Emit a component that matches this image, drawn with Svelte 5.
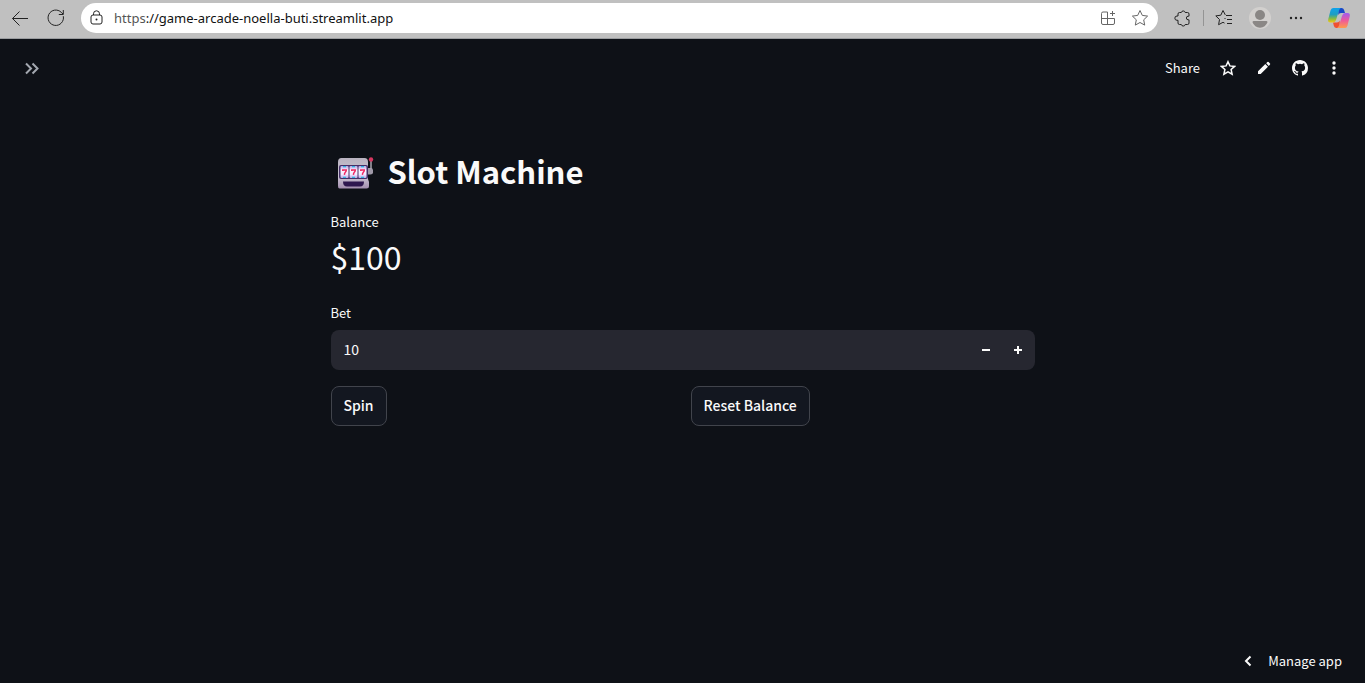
<script>
  let balance = $state(100);
  let bet = $state(10);

  function step(amount) {
    bet = Math.max(1, bet + amount);
  }

  function spin() {
    if (balance < bet) return;
    const reels = [0, 1, 2].map(() => Math.floor(Math.random() * 7));
    const won = reels.every((r) => r === reels[0]);
    balance += won ? bet * 10 : -bet;
  }

  function reset() {
    balance = 100;
  }
</script>

<div class="page">
  <header class="browser">
    <button class="chrome" aria-label="Back">
      <svg width="18" height="18" viewBox="0 0 18 18"><path d="M17 9.500H1.500M8.500 2.500l-7 7 7 7" /></svg>
    </button>
    <button class="chrome" aria-label="Refresh">
      <svg width="18" height="18" viewBox="0 0 18 18"><path d="M16.300 7.200A7.700 7.700 0 1 1 14.200 3.300L16 5M16.300 1v4.500h-4.500" /></svg>
    </button>
    <div class="address">
      <svg class="lock" width="14" height="16" viewBox="0 0 14 16">
        <rect x="1" y="5" width="11" height="9" rx="2" />
        <path d="M3.500 5V3.800a3 3 0 0 1 6 0V5" />
        <circle cx="6.500" cy="9.500" r="1" class="solid" />
      </svg>
      <span class="url"><span class="scheme">https</span>://game-arcade-noella-buti.streamlit.app</span>
      <button class="inner" aria-label="App available">
        <svg width="16" height="16" viewBox="0 0 16 16">
          <path d="M7.500 2H3a1.500 1.500 0 0 0-1.500 1.500V13A1.500 1.500 0 0 0 3 14.500h10A1.500 1.500 0 0 0 14.500 13V8.500h-13M7.500 2v12.500M12.500 1v5M10 3.500h5" />
        </svg>
      </button>
      <button class="inner" aria-label="Add to favorites">
        <svg width="18" height="18" viewBox="0 0 18 18">
          <path d="M9 1.500l2.300 4.900 5.300.7-3.900 3.700 1 5.300L9 13.500l-4.700 2.600 1-5.300-3.900-3.700 5.300-.7z" />
        </svg>
      </button>
    </div>
    <button class="chrome ext" aria-label="Extensions">
      <svg width="18" height="18" viewBox="0 0 18 18">
        <path d="M5.500 3.500h1.800a2 2 0 0 1 3.900 0h2.300a1.500 1.500 0 0 1 1.500 1.500v2.200h-.8a1.800 1.800 0 0 0 0 3.600h.8V14a1.500 1.500 0 0 1-1.500 1.500h-2.300a2 2 0 0 1-3.900 0H5.500A1.500 1.500 0 0 1 4 14v-2.700H3a2 2 0 0 1 0-4.300h1V5a1.500 1.500 0 0 1 1.500-1.500z" />
      </svg>
    </button>
    <span class="rule"></span>
    <button class="chrome fav" aria-label="Favorites">
      <svg width="18" height="18" viewBox="0 0 18 18">
        <path d="M11 6.500h6M12 10.500h5M12 14.500h5M10.300 5.900L8 1.500 5.800 6.200l-5 .7 3.700 3.600-.9 5.200L8 13.300l1.500.8M9.500 10l1-1" />
      </svg>
    </button>
    <button class="chrome avatar" aria-label="Profile">
      <svg width="22" height="22" viewBox="0 0 22 22">
        <circle cx="11" cy="11" r="11" fill="#d2d0ce" />
        <circle cx="11" cy="8" r="5" fill="#8a8785" />
        <path d="M3.500 15.300q0-1.300 1.300-1.300h12.400q1.300 0 1.300 1.300A8.900 8.900 0 0 1 11 20.800a8.900 8.900 0 0 1-7.500-5.500z" fill="#8a8785" />
      </svg>
    </button>
    <button class="chrome more" aria-label="Settings and more">
      <svg width="14" height="4" viewBox="0 0 14 4">
        <circle cx="2" cy="2" r="1.200" /><circle cx="7" cy="2" r="1.200" /><circle cx="12" cy="2" r="1.200" />
      </svg>
    </button>
    <button class="chrome copilot" aria-label="Copilot">
      <svg width="24" height="22" viewBox="0 0 24 22">
        <defs>
          <linearGradient id="cool" x1="0" y1="0" x2="0" y2="1">
            <stop offset="0" stop-color="#0fa2ec" /><stop offset=".45" stop-color="#1f9ec0" />
            <stop offset=".75" stop-color="#8dbb3c" /><stop offset="1" stop-color="#f5c813" />
          </linearGradient>
          <linearGradient id="warm" x1="0" y1="0" x2="0" y2="1">
            <stop offset="0" stop-color="#a05cf0" /><stop offset=".5" stop-color="#ee5a9a" />
            <stop offset="1" stop-color="#ff9a4a" />
          </linearGradient>
        </defs>
        <path d="M11 1h3.500q2 0 2.600 2l.9 3h-4q-2 0-2.600 2z" fill="#1748c8" />
        <path d="M13 21H9.500q-2 0-2.600-2L6 15.500h4q2 0 2.600-2z" fill="#f0502f" />
        <path d="M6 1h8q-1.400.4-2 2.400l-3 9.600q-.8 2.500-3 2.500H3.500Q.4 15.500 1.300 12L3.500 3.500Q4.200 1 6 1z" fill="url(#cool)" />
        <path d="M18 21h-8q1.400-.4 2-2.400L15 9q.8-3 3-3h2.500q3.100 0 2.200 3.500l-2.200 9Q19.800 21 18 21z" fill="url(#warm)" />
      </svg>
    </button>
  </header>

  <div class="app">
    <nav class="toolbar" aria-label="App toolbar">
      <button class="tool expand" aria-label="Open sidebar">
        <svg width="16" height="14" viewBox="0 0 16 14"><path d="M2 2.500L7 7.500l-5 5M8.500 2.500l5 5-5 5" /></svg>
      </button>
      <div class="actions">
        <button class="tool share">Share</button>
        <button class="tool" aria-label="Favorite app">
          <svg class="line" width="16" height="16" viewBox="0 0 16 16">
            <path d="M8 1.700l1.900 4.200 4.700.5-3.500 3.100 1 4.700L8 11.800l-4.100 2.400 1-4.700L1.400 6.400l4.700-.5z" />
          </svg>
        </button>
        <button class="tool" aria-label="Edit source">
          <svg width="16" height="16" viewBox="0 0 16 16">
            <path d="M2 14v-2.700l7.300-7.200L12 6.800 4.700 14zM10.200 3.200l1.200-1.200q.6-.5 1.200 0L14 3.400q.5.600 0 1.200l-1.200 1.300z" />
          </svg>
        </button>
        <a class="tool" href="#source" aria-label="View on GitHub">
          <svg width="16" height="16" viewBox="0 0 16 16">
            <path d="M8 0C3.580 0 0 3.580 0 8c0 3.540 2.290 6.530 5.470 7.590.4.070.550-.170.550-.380 0-.190-.010-.820-.010-1.490-2.010.370-2.530-.490-2.690-.940-.090-.230-.480-.940-.820-1.130-.280-.150-.680-.520-.010-.530.630-.010 1.080.580 1.230.820.720 1.210 1.870.870 2.330.660.070-.520.280-.870.510-1.070-1.780-.200-3.640-.890-3.640-3.950 0-.870.310-1.590.820-2.150-.080-.200-.360-1.020.080-2.120 0 0 .670-.210 2.200.820a7.600 7.600 0 0 1 4 0c1.530-1.040 2.200-.820 2.200-.820.440 1.100.160 1.920.080 2.120.510.560.820 1.270.820 2.150 0 3.070-1.870 3.750-3.650 3.950.290.250.540.730.540 1.480 0 1.070-.010 1.930-.010 2.200 0 .210.150.460.550.380A8.010 8.010 0 0 0 16 8c0-4.420-3.580-8-8-8z" />
          </svg>
        </a>
        <button class="tool kebab" aria-label="Main menu">
          <svg width="4" height="16" viewBox="0 0 4 16">
            <circle cx="2" cy="3" r="1.700" /><circle cx="2" cy="8" r="1.700" /><circle cx="2" cy="13" r="1.700" />
          </svg>
        </button>
      </div>
    </nav>

    <main>
      <h1>
        <svg width="37" height="38" viewBox="0 -4 37 38" role="img" aria-label="Slot machine">
          <defs>
            <linearGradient id="body" x1="0" y1="0" x2="0" y2="1">
              <stop offset="0" stop-color="#b9b3c0" /><stop offset=".6" stop-color="#cbc4d3" /><stop offset="1" stop-color="#a48fb0" />
            </linearGradient>
            <linearGradient id="reel" x1="0" y1="0" x2="0" y2="1">
              <stop offset="0" stop-color="#b9a6e8" /><stop offset=".35" stop-color="#fbf4ff" />
              <stop offset=".7" stop-color="#f5e9ff" /><stop offset="1" stop-color="#bba4e4" />
            </linearGradient>
          </defs>
          <path d="M30 12h3.500q2.500 0 2.500 2v2.500q0 2-2.500 2H30z" fill="#9f99a8" />
          <path d="M34 4v9" stroke="#aaa4b0" stroke-width="1.500" />
          <circle cx="34" cy="3.500" r="2.200" fill="#d63760" />
          <path d="M4.500 2h23q3.500 0 3.500 4v17l1 3v4q0 2.500-2.500 2.500h-27Q1 32.500 1 30V6q0-4 3.500-4z" fill="url(#body)" />
          <rect x="2" y="9" width="29" height="14" rx="2" fill="#453067" />
          {#each [3.5, 12.5, 21.5] as x}
            <g transform="translate({x} 10)">
              <rect width="8" height="12" rx="1" fill="url(#reel)" />
              <path d="M2.500.6h3M2.500 11.400h3" stroke="#2fb3e0" stroke-width="1.200" />
              <path d="M2.300 5V3.900h3.500q0 1.300-1 2.300T4 8.900" fill="none" stroke="#ef2862" stroke-width="1.500" />
            </g>
          {/each}
          <path d="M6 25.500h21q0 5-4 5H10Q6 30.500 6 25.500z" fill="#2e174f" />
        </svg>
        <span>Slot Machine</span>
      </h1>

      <section class="metric" aria-label="Balance">
        <div class="label">Balance</div>
        <div class="value">${balance}</div>
      </section>

      <label class="label" for="bet">Bet</label>
      <div class="number">
        <input id="bet" type="text" inputmode="numeric" bind:value={bet} />
        <button aria-label="Decrease bet" onclick={() => step(-1)}>
          <svg width="8" height="8" viewBox="0 0 8 8"><path d="M0 3h8v2H0z" /></svg>
        </button>
        <button aria-label="Increase bet" onclick={() => step(1)}>
          <svg width="8" height="8" viewBox="0 0 8 8"><path d="M0 3h3V0h2v3h3v2H5v3H3V5H0z" /></svg>
        </button>
      </div>

      <div class="columns">
        <div><button class="action" onclick={spin}>Spin</button></div>
        <div><button class="action" onclick={reset}>Reset Balance</button></div>
      </div>
    </main>

    <footer>
      <button class="manage">
        <svg width="8" height="12" viewBox="0 0 8 12"><path d="M6.500 1.500L2 6l4.500 4.500" /></svg>
        Manage app
      </button>
    </footer>
  </div>
</div>

<style>
  :global(body) {
    margin: 0;
    background: #0e1117;
  }
  .page {
    display: flex;
    flex-direction: column;
    min-height: 100vh;
    color: #fafafa;
    font-family: "Noto Sans CJK SC", "Noto Sans", sans-serif;
  }
  button,
  input {
    font: inherit;
    color: inherit;
    border: 0;
    margin: 0;
    padding: 0;
    background: none;
  }
  button {
    cursor: pointer;
  }
  svg {
    display: block;
    flex: none;
  }

  .browser {
    display: flex;
    align-items: center;
    box-sizing: border-box;
    height: 39px;
    padding: 0 14px 3px 11px;
    background: #c0c0c0;
    border-bottom: 1px solid #9a9c9f;
  }
  .chrome {
    flex: none;
  }
  .chrome + .chrome {
    margin-left: 18px;
  }
  .chrome svg,
  .address svg {
    fill: none;
    stroke: #222;
    stroke-width: 1;
  }
  .address {
    display: flex;
    flex: 1;
    align-items: center;
    height: 30px;
    margin: 0 16px 0 16px;
    padding: 0 9px;
    border-radius: 15px;
    background: #fff;
    color: #111;
  }
  .address .lock .solid {
    fill: #222;
    stroke: none;
  }
  .url {
    flex: 1;
    margin-left: 10px;
    font: 13px/18px "Noto Sans", sans-serif;
  }
  .scheme {
    color: #555;
  }
  .inner {
    margin-left: 15px;
  }
  .address .inner svg {
    stroke: #666;
  }
  .rule {
    width: 1px;
    height: 16px;
    margin: 0 11px;
    background: #949494;
  }
  .chrome.avatar {
    margin-left: 16px;
  }
  .chrome.avatar svg,
  .chrome.copilot svg {
    stroke: none;
  }
  .chrome.more svg {
    fill: #222;
    stroke: none;
  }
  .chrome.copilot {
    margin-left: 24px;
  }

  .app {
    display: flex;
    flex: 1;
    flex-direction: column;
  }
  .toolbar {
    display: flex;
    align-items: center;
    justify-content: space-between;
    height: 58px;
    padding: 0 25px 0 24px;
  }
  .actions {
    display: flex;
    align-items: center;
    gap: 20px;
  }
  .tool {
    color: #fafafa;
  }
  .tool svg {
    fill: currentColor;
  }
  .expand svg {
    fill: none;
    stroke: #a3a8b0;
    stroke-width: 2;
  }
  .tool .line {
    fill: none;
    stroke: currentColor;
    stroke-width: 1.5;
  }
  .kebab {
    padding: 0 4px;
  }
  .share,
  .label,
  .manage {
    font-size: 13px;
    line-height: 20px;
  }

  main {
    box-sizing: border-box;
    width: 100%;
    max-width: 736px;
    margin: 0 auto;
    padding: 50px 16px 0;
  }
  h1 {
    display: flex;
    align-items: center;
    gap: 14px;
    margin: 0 0 17px;
    padding-left: 6px;
    font-size: 31px;
    font-weight: 600;
    line-height: 48px;
  }
  .metric {
    margin-bottom: 23px;
  }
  .label {
    display: block;
  }
  .value {
    font-size: 32px;
    line-height: 48px;
  }
  .number {
    display: flex;
    height: 40px;
    margin-top: 7px;
    padding-right: 1px;
    border-radius: 8px;
    background: #262730;
    overflow: hidden;
  }
  .number input {
    flex: 1;
    min-width: 0;
    padding: 0 13px 2px;
    font-size: 14px;
    outline: none;
  }
  .number button {
    display: grid;
    place-items: center;
    width: 32px;
  }
  .number svg {
    fill: #fafafa;
  }
  .columns {
    display: grid;
    grid-template-columns: 1fr 1fr;
    gap: 16px;
    margin-top: 16px;
  }
  .action {
    height: 40px;
    padding: 0 12px 2px;
    border: 1px solid #41444c;
    border-radius: 8px;
    background: #131720;
    font-size: 14px;
    font-weight: 500;
  }
  footer {
    display: flex;
    justify-content: flex-end;
    margin-top: auto;
    padding: 12px 23px;
  }
  .manage {
    display: flex;
    align-items: center;
    gap: 16px;
  }
  .manage svg {
    fill: none;
    stroke: currentColor;
    stroke-width: 2;
  }
</style>
